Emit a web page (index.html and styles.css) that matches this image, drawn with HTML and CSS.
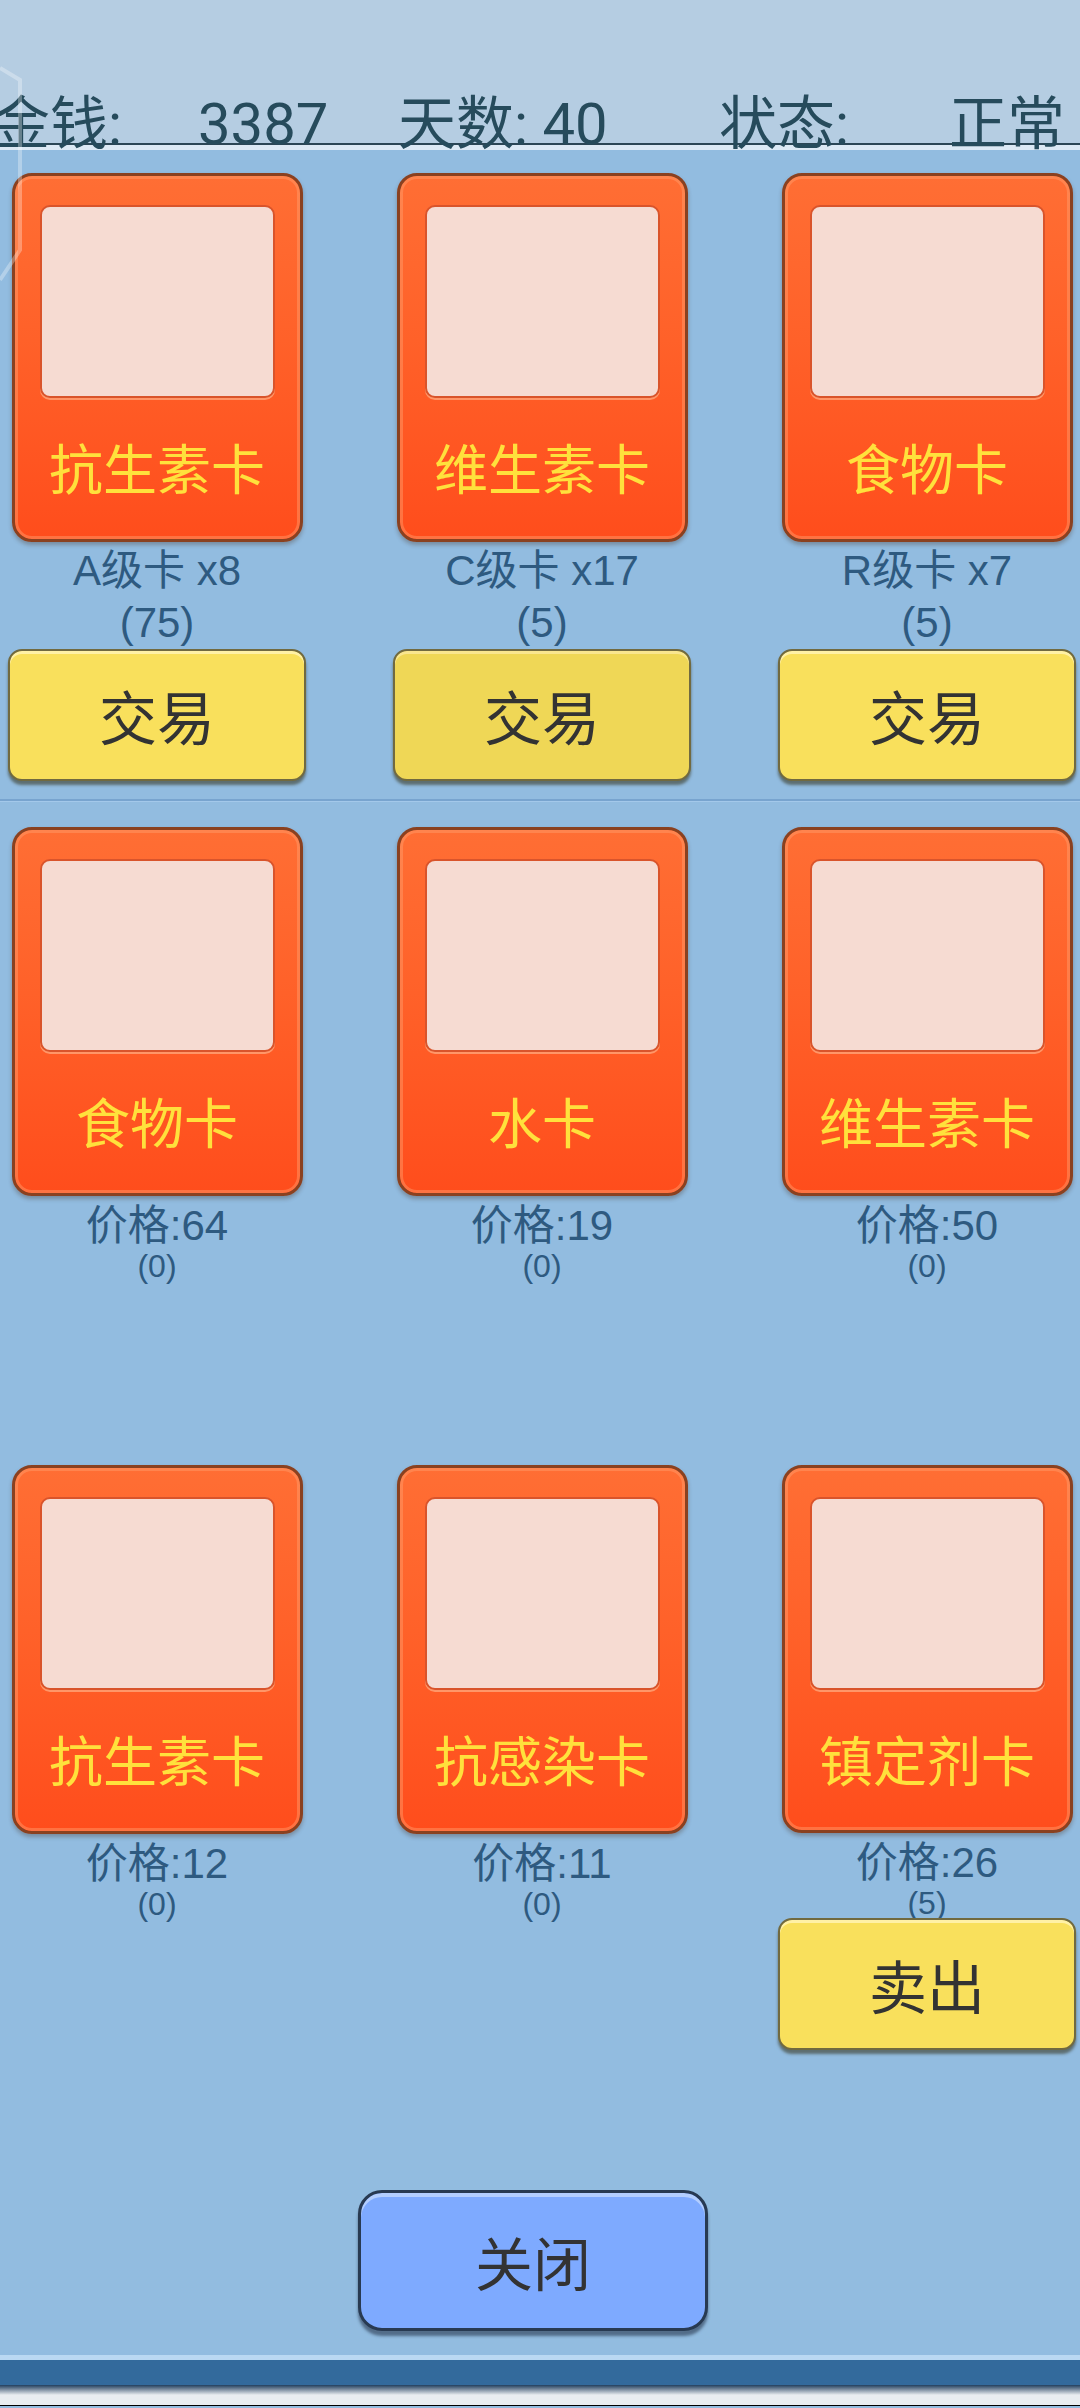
FILE: index.html
```html
<!DOCTYPE html>
<html lang="zh-CN">
<head>
    <meta charset="UTF-8">
    <meta name="viewport" content="width=device-width, initial-scale=1.0">
    <title>卡牌交易</title>
    <link rel="stylesheet" href="styles.css">
</head>
<body>

<div class="screen">
    <!-- 顶部状态栏 -->
    <div class="stats">
        <span class="stat s-money">金钱:</span>
        <span class="stat s-money-val">3387</span>
        <span class="stat s-days">天数: 40</span>
        <span class="stat s-state">状态:</span>
        <span class="stat s-state-val">正常</span>
    </div>
    <div class="stats-shine"></div>

    <svg class="hex-ghost" width="40" height="300" viewBox="0 0 40 300">
        <polyline points="0,68 20,80 20,250 0,280" fill="none" stroke="rgba(255,255,255,0.3)" stroke-width="4"/>
    </svg>

    <div class="panel">
        <!-- 我的卡牌 -->
        <div class="grid trade-row">
            <div class="cell">
                <div class="card"><div class="card-pic"></div><div class="card-name">抗生素卡</div></div>
                <div class="info"><div>A级卡 x8</div><div>(75)</div></div>
                <button class="btn-yellow">交易</button>
            </div>
            <div class="cell">
                <div class="card"><div class="card-pic"></div><div class="card-name">维生素卡</div></div>
                <div class="info"><div>C级卡 x17</div><div>(5)</div></div>
                <button class="btn-yellow pressed">交易</button>
            </div>
            <div class="cell">
                <div class="card"><div class="card-pic"></div><div class="card-name">食物卡</div></div>
                <div class="info"><div>R级卡 x7</div><div>(5)</div></div>
                <button class="btn-yellow">交易</button>
            </div>
        </div>

        <div class="divider"></div>

        <!-- 商店 -->
        <div class="grid shop">
            <div class="cell">
                <div class="card"><div class="card-pic"></div><div class="card-name">食物卡</div></div>
                <div class="price">价格:64</div><div class="count">(0)</div>
            </div>
            <div class="cell">
                <div class="card"><div class="card-pic"></div><div class="card-name">水卡</div></div>
                <div class="price">价格:19</div><div class="count">(0)</div>
            </div>
            <div class="cell">
                <div class="card"><div class="card-pic"></div><div class="card-name">维生素卡</div></div>
                <div class="price">价格:50</div><div class="count">(0)</div>
            </div>
            <div class="cell">
                <div class="card"><div class="card-pic"></div><div class="card-name">抗生素卡</div></div>
                <div class="price">价格:12</div><div class="count">(0)</div>
            </div>
            <div class="cell">
                <div class="card"><div class="card-pic"></div><div class="card-name">抗感染卡</div></div>
                <div class="price">价格:11</div><div class="count">(0)</div>
            </div>
            <div class="cell">
                <div class="card"><div class="card-pic"></div><div class="card-name">镇定剂卡</div></div>
                <div class="price">价格:26</div><div class="count">(5)</div>
                <button class="btn-yellow">卖出</button>
            </div>
        </div>

        <div class="footer">
            <button class="btn-close">关闭</button>
        </div>
    </div>

    <div class="panel-edge"></div>
    <div class="bottom-bar"></div>
    <div class="bottom-shadow"></div>
    <div class="bottom-light"></div>
</div>

</body>
</html>
```

FILE: styles.css
```css
/* ===== Dasar ===== */
body {
    margin: 0;
    width: 1080px;
    height: 2408px;
    overflow: hidden;
    background: #000;
    font-family: "Liberation Sans", "Noto Sans CJK SC", sans-serif;
}

.screen {
    position: relative;
    width: 1080px;
    height: 2408px;
    overflow: hidden;
    background: #92bce0;
}

/* ===== Status bar atas ===== */
.stats {
    height: 145px;
    box-sizing: border-box;
    background: #b5cde2;
    border-bottom: 2px solid #2b4656;
    display: flex;
    align-items: flex-end;
    font-family: Roboto, "Noto Sans CJK SC", sans-serif;
    font-size: 58px;
    line-height: 58px;
    color: #264b5c;
    white-space: nowrap;
}

.stats-shine {
    height: 5px;
    background: #dce9f5;
}

.stat {
    display: block;
    margin-bottom: -10px;
}

.s-money { width: 206px; margin-left: -8px; }
.s-money-val { width: 200px; }
.s-days { width: 321px; }
.s-state { width: 230px; }

.hex-ghost {
    position: absolute;
    left: 0;
    top: 0;
}

/* ===== Panel ===== */
.panel {
    height: 2205px;
    box-sizing: border-box;
    padding-top: 23px;
}

.grid {
    display: grid;
    grid-template-columns: repeat(3, 298px);
    column-gap: 87px;
    padding-left: 8px;
}

.cell {
    display: flex;
    flex-direction: column;
    align-items: center;
}

/* ===== Kartu ===== */
.card {
    width: 291px;
    height: 369px;
    box-sizing: border-box;
    border: 3px solid #8a4120;
    border-radius: 20px;
    padding: 29px 25px 0;
    background: linear-gradient(#ff6e34, #ff6129 45%, #ff4d1c);
    box-shadow: inset 0 0 0 3px rgba(255, 160, 110, 0.45), 0 3px 4px rgba(60, 30, 10, 0.3);
    display: flex;
    flex-direction: column;
}

.card-pic {
    height: 193px;
    box-sizing: border-box;
    border: 2px solid #d9542b;
    border-radius: 10px;
    background: #f6dbd2;
    box-shadow: 0 2px 0 rgba(255, 190, 150, 0.6);
}

.card-name {
    flex: 1;
    display: flex;
    align-items: center;
    justify-content: center;
    font-family: "Noto Sans CJK SC", sans-serif;
    font-size: 54px;
    color: #ffe13c;
    padding-bottom: 4px;
}

.info {
    height: 107px;
    box-sizing: border-box;
    padding-top: 3px;
    font-size: 42px;
    line-height: 52px;
    color: #2e5a80;
    text-align: center;
}

.price {
    padding-top: 5px;
    font-size: 42px;
    line-height: 50px;
    color: #2e5a80;
}

.count {
    font-size: 32px;
    line-height: 30px;
    color: #2e5a80;
}

/* ===== Tombol ===== */
.btn-yellow {
    width: 298px;
    height: 132px;
    border: 2px solid #716a40;
    border-radius: 14px;
    background: #f9e05c;
    box-shadow: inset 0 3px 0 #fff1a6, 0 4px 3px rgba(50, 45, 20, 0.55);
    font-family: "Noto Sans CJK SC", sans-serif;
    font-size: 58px;
    color: #333;
    padding: 0;
}

.btn-yellow.pressed {
    background: #efd756;
    box-shadow: inset 0 3px 0 #f9e68f, 0 4px 3px rgba(50, 45, 20, 0.55);
}

.divider {
    margin: 18px 0 25px;
    height: 2px;
    background: #78a4cf;
    border-bottom: 1px solid #a3c8ea;
}

.shop {
    grid-auto-rows: 585px;
    row-gap: 53px;
}

.footer {
    display: flex;
    justify-content: center;
    padding-right: 14px;
    margin-top: 140px;
}

.btn-close {
    width: 350px;
    height: 141px;
    border: 3px solid #283a52;
    border-radius: 24px;
    background: #7eaaff;
    box-shadow: inset 0 4px 0 #b3ceff, 0 5px 3px rgba(20, 30, 50, 0.5);
    font-family: "Noto Sans CJK SC", sans-serif;
    font-size: 58px;
    color: #333;
    padding: 0;
}

/* ===== Bagian bawah ===== */
.panel-edge {
    height: 5px;
    background: #bad8f2;
}

.bottom-bar {
    height: 25px;
    background: #336a9c;
}

.bottom-shadow {
    height: 10px;
    background: linear-gradient(#223f5e, #e9edf1);
}

.bottom-light {
    height: 10px;
    background: #e9edf1;
    border-bottom: 1px solid #000;
}
```
